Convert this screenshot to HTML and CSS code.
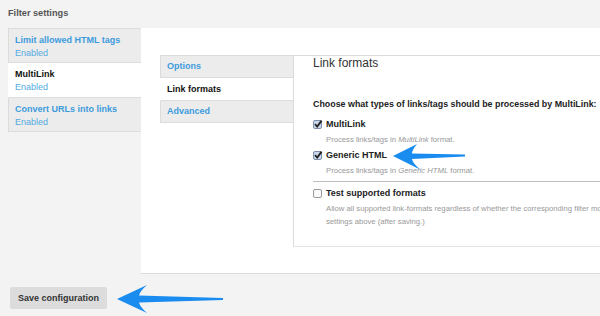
FILE: index.html
```html
<!DOCTYPE html>
<html>
<head>
<meta charset="utf-8">
<link rel="stylesheet" href="styles.css">
</head>
<body>
<div class="page">
  <h2 class="title">Filter settings</h2>
  <div class="filters">
    <ul class="vtabs">
      <li class="tab"><span class="tab-name">Limit allowed HTML tags</span><span class="tab-sum">Enabled</span></li>
      <li class="tab active"><span class="tab-name">MultiLink</span><span class="tab-sum">Enabled</span></li>
      <li class="tab"><span class="tab-name">Convert URLs into links</span><span class="tab-sum">Enabled</span></li>
    </ul>
    <div class="panel">
      <div class="inner">
        <ul class="vtabs2">
          <li class="tab2"><span class="tab-name">Options</span></li>
          <li class="tab2 active"><span class="tab-name">Link formats</span></li>
          <li class="tab2"><span class="tab-name">Advanced</span></li>
        </ul>
        <div class="pane">
          <h3 class="pane-title">Link formats</h3>
          <p class="lead">Choose what types of links/tags should be processed by MultiLink:</p>
          <div class="opt first">
            <label class="cb-row"><span class="cb checked"><svg viewBox="0 0 10 10" width="10" height="10"><path d="M2 5.2 L4.2 7.6 L8.6 1.6" fill="none" stroke="#222" stroke-width="1.8"/></svg></span><span class="cb-label">MultiLink</span></label>
            <div class="desc">Process links/tags in <em>MultiLink</em> format.</div>
          </div>
          <div class="opt">
            <label class="cb-row"><span class="cb checked"><svg viewBox="0 0 10 10" width="10" height="10"><path d="M2 5.2 L4.2 7.6 L8.6 1.6" fill="none" stroke="#222" stroke-width="1.8"/></svg></span><span class="cb-label">Generic HTML</span></label>
            <div class="desc">Process links/tags in <em>Generic HTML</em> format.</div>
          </div>
          <div class="opt sep">
            <label class="cb-row"><span class="cb"></span><span class="cb-label">Test supported formats</span></label>
            <div class="desc tall">Allow all supported link-formats regardless of whether the corresponding filter module is enabled<br>settings above (after saving.)</div>
          </div>
        </div>
      </div>
    </div>
  </div>
  <div class="actions">
    <button class="btn">Save configuration</button>
  </div>
  <svg class="arrow arrow-1" width="74" height="28" viewBox="0 0 74 28">
    <path d="M0 13 L24 1 Q19 7 19 10.5 L72 11.5 L72 13.5 L19 16 Q20 21 28 27 Z" fill="#1a8cf0"/>
  </svg>
  <svg class="arrow arrow-2" width="108" height="30" viewBox="0 0 108 30">
    <path d="M0 15 L30 1 Q23 7 22 11.5 L106 14 L106 16 L22 18.5 Q23 23 30 29 Z" fill="#1a8cf0"/>
  </svg>
</div>
</body>
</html>
```

FILE: styles.css
```css
* { box-sizing: border-box; }
html, body { margin: 0; padding: 0; }
body {
  background: #f3f3f3;
  font-family: "Liberation Sans", Arial, Helvetica, sans-serif;
  color: #333;
  width: 600px;
  height: 316px;
  overflow: hidden;
}
.page { position: relative; width: 600px; height: 316px; overflow: hidden; }
.title {
  margin: 0;
  padding: 8px 0 0 8px;
  height: 28px;
  font-size: 9.2px;
  line-height: 11px;
  font-weight: bold;
  color: #555;
}
.filters {
  display: flex;
  margin-left: 8px;
  height: 246px;
}
ul { list-style: none; margin: 0; padding: 0; }
.vtabs {
  width: 133px;
  flex: none;
  border-top: 1px solid #dcdcdc;
}
.tab {
  display: flex;
  flex-direction: column;
  height: 34px;
  padding: 6px 5px 0 6px;
  background: #ececec;
  border-left: 1px solid #dcdcdc;
  border-bottom: 1px solid #dcdcdc;
}
.tab.active { background: #fff; border-left-color: #fff; height: 35px; }
.tab-name {
  font-size: 9px;
  font-weight: bold;
  color: #3e9bdc;
  line-height: 11px;
  white-space: nowrap;
}
.tab.active .tab-name, .tab2.active .tab-name { color: #111; }
.tab-sum {
  font-size: 9px;
  color: #55aae2;
  line-height: 11px;
  margin-top: 2px;
}
.panel {
  flex: 1;
  background: #fff;
  border-bottom: 1px solid #dcdcdc;
  padding: 27px 0 0 19px;
  min-width: 0;
}
.inner { display: flex; height: 192px; }
.vtabs2 {
  width: 133px;
  flex: none;
  border-top: 1px solid #dcdcdc;
}
.tab2 {
  display: flex;
  align-items: center;
  height: 22px;
  padding: 0 5px 0 6px;
  background: #ececec;
  border-left: 1px solid #dcdcdc;
  border-bottom: 1px solid #dcdcdc;
}
.tab2.active { background: #fff; border-left-color: #fff; height: 23px; }
.pane {
  flex: 1;
  min-width: 0;
  border-top: 1px solid #dcdcdc;
  border-left: 1px solid #dcdcdc;
  border-bottom: 1px solid #e4e4e4;
  padding: 0 0 0 19px;
  white-space: nowrap;
  overflow: hidden;
}
.pane-title {
  margin: 0;
  font-size: 12px;
  font-weight: normal;
  color: #333;
  line-height: 14px;
}
.lead {
  margin: 28px 0 0 0;
  font-size: 8.9px;
  font-weight: bold;
  color: #222;
  line-height: 12px;
}
.opt { margin-top: 3px; }
.opt.first { margin-top: 8px; }
.cb-row { display: flex; align-items: center; gap: 4px; height: 12px; }
.cb {
  width: 9px; height: 9px;
  border: 1px solid #9a9a9a;
  border-radius: 2px;
  background: #fafafa;
  position: relative;
  flex: none;
}
.cb.checked { background: #c9d8ee; border-color: #7d8ca8; }
.cb svg { position: absolute; left: -1px; top: -2px; }
.cb-label { font-size: 9px; font-weight: bold; color: #222; }
.desc {
  margin: 4px 0 0 13px;
  font-size: 7.7px;
  color: #999;
  line-height: 12px;
}
.desc.tall { line-height: 13px; margin-top: 3px; }
.desc em { font-style: italic; }
.opt.sep {
  margin-top: 4px;
  border-top: 1px solid #bdbdbd;
  padding-top: 5px;
}
.actions { padding: 13px 0 0 10px; }
.btn {
  width: 97px;
  height: 22px;
  background: #dcdcdc;
  border: none;
  border-radius: 2px;
  font-family: "Liberation Sans", Arial, sans-serif;
  font-size: 9px;
  font-weight: bold;
  color: #333;
  padding: 0;
}
.arrow { position: absolute; }
.arrow-1 { left: 393px; top: 143px; }
.arrow-2 { left: 117px; top: 284px; }
```
